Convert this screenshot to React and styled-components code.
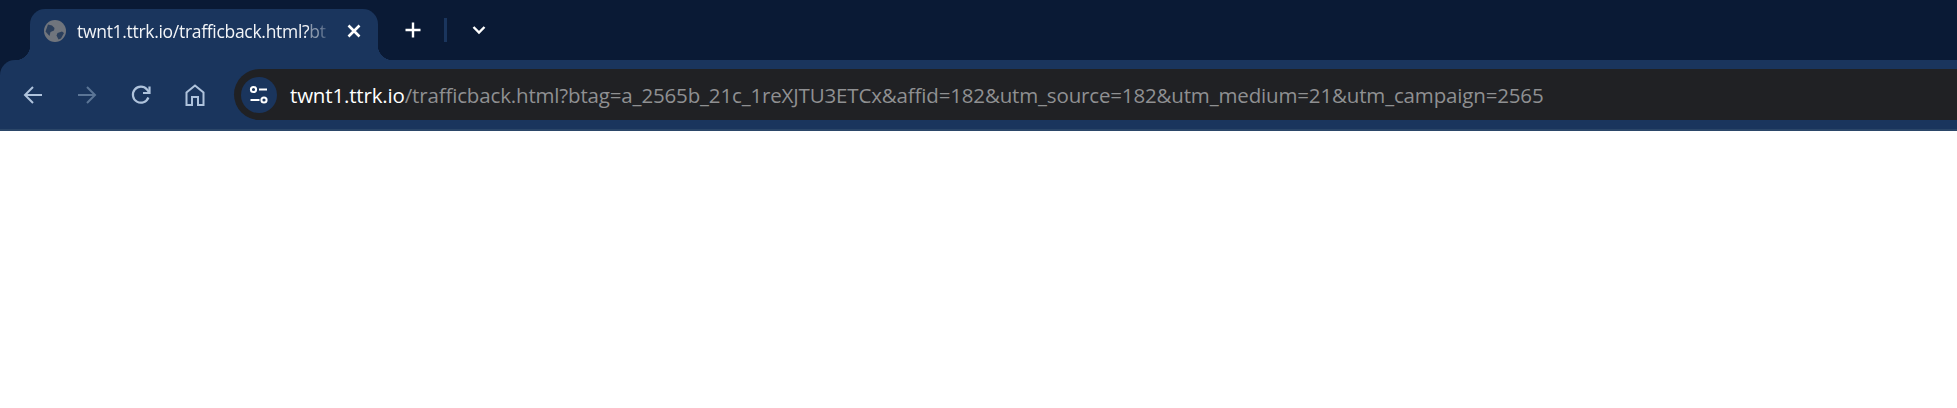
import React from 'react';
import styled, { createGlobalStyle } from 'styled-components';

const frameColor = '#0a1a35';
const toolbarColor = '#1a355d';
const uiFont = '"Open Sans", "Noto Sans", "Liberation Sans", sans-serif';

const GlobalStyle = createGlobalStyle`
  html, body {
    margin: 0;
    padding: 0;
    background: #fff;
  }
`;

const Page = styled.div`
  width: 100%;
  height: 408px;
  background: #fff;
  overflow: hidden;
`;

const TabStrip = styled.div`
  display: flex;
  align-items: flex-end;
  height: 60px;
  padding-left: 30px;
  background: ${frameColor};
`;

const Tab = styled.div`
  position: relative;
  display: flex;
  align-items: center;
  box-sizing: border-box;
  width: 348px;
  height: 51px;
  padding: 0 14px 8px 13px;
  background: ${toolbarColor};
  border-radius: 15px 15px 0 0;

  &::before,
  &::after {
    content: '';
    position: absolute;
    bottom: 0;
    width: 15px;
    height: 15px;
  }
  &::before {
    left: -15px;
    background: radial-gradient(circle at 0 0, transparent 15px, ${toolbarColor} 15.5px);
  }
  &::after {
    right: -15px;
    background: radial-gradient(circle at 100% 0, transparent 15px, ${toolbarColor} 15.5px);
  }
`;

const TabTitle = styled.span`
  flex: 1;
  margin-left: 10px;
  white-space: nowrap;
  font: 400 17.5px ${uiFont};
  letter-spacing: -0.3px;
  color: #f2f4f7;
  -webkit-mask-image: linear-gradient(90deg, #000 93%, transparent 98%);
  mask-image: linear-gradient(90deg, #000 93%, transparent 98%);

  span {
    color: #8b99ad;
  }
`;

const TabClose = styled.button`
  display: flex;
  align-items: center;
  justify-content: center;
  flex: none;
  width: 20px;
  height: 20px;
  margin-left: 8px;
  padding: 0;
  border: 0;
  background: none;
  color: #fff;
`;

const StripButton = styled.button`
  display: flex;
  align-items: center;
  justify-content: center;
  width: ${(p) => p.$size}px;
  height: 32px;
  margin: 0 0 14px ${(p) => p.$gap}px;
  padding: 0;
  border: 0;
  background: none;
  color: #fff;
`;

const StripDivider = styled.div`
  width: 3px;
  height: 24px;
  margin: 0 0 18px 21px;
  background: #1a355d;
`;

const Toolbar = styled.div`
  position: relative;
  display: flex;
  align-items: center;
  box-sizing: border-box;
  height: 71px;
  padding: 0 0 0 13px;
  background: ${toolbarColor};
  border-top-left-radius: 15px;
  border-bottom: 2px solid #2b4668;
`;

const ToolbarCorner = styled.div`
  background: ${frameColor};
`;

const NavButton = styled.button`
  display: flex;
  align-items: center;
  justify-content: center;
  flex: none;
  width: 40px;
  height: 40px;
  margin-right: 14px;
  padding: 0;
  border: 0;
  background: none;
  color: ${(p) => (p.$disabled ? '#5b7596' : '#afc3dc')};
`;

const Omnibox = styled.div`
  display: flex;
  align-items: center;
  flex: 1;
  height: 51px;
  margin-left: 5px;
  padding-left: 7px;
  background: #202124;
  border-radius: 25.5px 0 0 25.5px;
`;

const SiteInfo = styled.div`
  display: flex;
  align-items: center;
  justify-content: center;
  flex: none;
  width: 36px;
  height: 36px;
  border-radius: 50%;
  background: ${toolbarColor};
  color: #fff;
`;

const Url = styled.div`
  margin-left: 13px;
  white-space: nowrap;
  font: 400 20.5px ${uiFont};
  letter-spacing: -0.16px;
  color: #8f9092;

  b {
    font-weight: 400;
    color: #fff;
  }
`;

const Globe = () => (
  <svg width="24" height="24" viewBox="0 0 24 24" fill="none">
    <circle cx="12" cy="12" r="11" fill="#70757d" />
    <path d="M5 5.500l4 1 2.500 2.500-.5 2.500-3.500 1.500-1 4-4-4.500zM14.500 14l4.500-1.500 2 1.500-3 5.500-2.500 1-2-4z" fill="#2b3f5c" />
  </svg>
);

const Close = () => (
  <svg width="20" height="20" viewBox="0 0 20 20" fill="none" stroke="currentColor" strokeWidth="2.6">
    <path d="M4.500 4.500l11 11M15.500 4.500l-11 11" />
  </svg>
);

const Plus = () => (
  <svg width="20" height="20" viewBox="0 0 20 20" fill="none" stroke="currentColor" strokeWidth="2.4">
    <path d="M10 2.500v15M2.500 10h15" />
  </svg>
);

const Chevron = () => (
  <svg width="16" height="16" viewBox="0 0 16 16" fill="none" stroke="currentColor" strokeWidth="2.4">
    <path d="M2.500 5l5.500 5.500L13.500 5" />
  </svg>
);

const Arrow = ({ flip }) => (
  <svg width="22" height="20" viewBox="0 0 22 20" fill="none" stroke="currentColor" strokeWidth="2" style={flip ? { transform: 'scaleX(-1)' } : undefined}>
    <path d="M20 10H3M11 2l-8 8 8 8" />
  </svg>
);

const Reload = () => (
  <svg width="22" height="22" viewBox="0 0 22 22" fill="none" stroke="currentColor" strokeWidth="2.2">
    <path d="M18.400 13.500A8 8 0 1 1 17 5.500L19 8" />
    <path d="M19.500 2.500v6.500H13" />
  </svg>
);

const Home = () => (
  <svg width="22" height="24" viewBox="0 0 22 24" fill="none" stroke="currentColor" strokeWidth="2">
    <path d="M2.500 22V9.500L11 2.500l8.500 7V22h-5.500v-8h-6v8z" />
  </svg>
);

const Tune = () => (
  <svg width="20" height="20" viewBox="0 0 20 20" fill="none" stroke="currentColor" strokeWidth="2">
    <circle cx="4.500" cy="4.500" r="2.600" />
    <path d="M10 4.500h8M1.500 15h9" />
    <circle cx="15" cy="15" r="2.600" />
  </svg>
);

export default function App() {
  return (
    <Page>
      <GlobalStyle />
      <TabStrip>
        <Tab>
          <Globe />
          <TabTitle>
            twnt1.ttrk.io/trafficback.html?<span>bt</span>
          </TabTitle>
          <TabClose>
            <Close />
          </TabClose>
        </Tab>
        <StripButton $size={20} $gap={25}>
          <Plus />
        </StripButton>
        <StripDivider />
        <StripButton $size={16} $gap={24}>
          <Chevron />
        </StripButton>
      </TabStrip>
      <ToolbarCorner>
        <Toolbar>
          <NavButton>
            <Arrow />
          </NavButton>
          <NavButton $disabled>
            <Arrow flip />
          </NavButton>
          <NavButton>
            <Reload />
          </NavButton>
          <NavButton>
            <Home />
          </NavButton>
          <Omnibox>
            <SiteInfo>
              <Tune />
            </SiteInfo>
            <Url>
              <b>twnt1.ttrk.io</b>/trafficback.html?btag=a_2565b_21c_1reXJTU3ETCx&amp;affid=182&amp;utm_source=182&amp;utm_medium=21&amp;utm_campaign=2565
            </Url>
          </Omnibox>
        </Toolbar>
      </ToolbarCorner>
    </Page>
  );
}
